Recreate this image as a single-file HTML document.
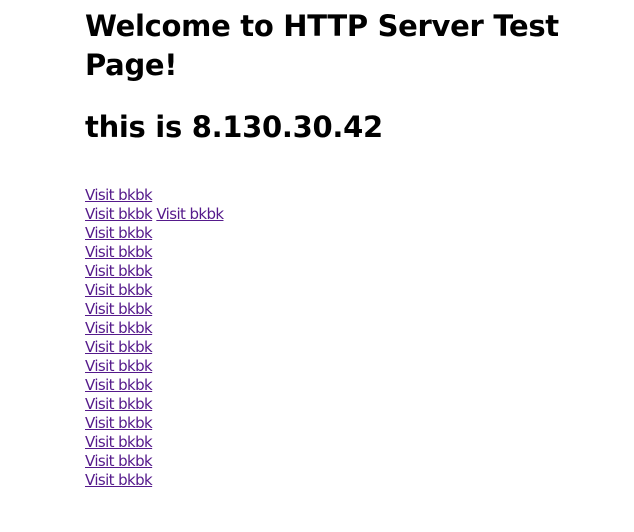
<!DOCTYPE html>
<html><head><meta charset="utf-8"><style>
html,body{margin:0;padding:0;background:#fff;width:634px;height:532px;overflow:hidden}
body{font-family:"DejaVu Sans","Liberation Sans",sans-serif;color:#000}
.h{position:absolute;left:85px;margin:0;font-weight:bold;font-size:29px;white-space:nowrap;line-height:39px;letter-spacing:-0.3px}
#links{position:absolute;left:85px;top:186px;font-size:15px;line-height:19px;font-family:"DejaVu Sans",sans-serif;letter-spacing:-0.6px}
a{color:#551a8b;text-decoration:underline}
</style></head><body>
<h1 class="h" style="top:7px">Welcome to HTTP Server Test<br>Page!</h1>
<h2 class="h" style="top:108px">this is 8.130.30.42</h2>
<div id="links">
<a>Visit bkbk</a><br>
<a>Visit bkbk</a> <a>Visit bkbk</a><br>
<a>Visit bkbk</a><br>
<a>Visit bkbk</a><br>
<a>Visit bkbk</a><br>
<a>Visit bkbk</a><br>
<a>Visit bkbk</a><br>
<a>Visit bkbk</a><br>
<a>Visit bkbk</a><br>
<a>Visit bkbk</a><br>
<a>Visit bkbk</a><br>
<a>Visit bkbk</a><br>
<a>Visit bkbk</a><br>
<a>Visit bkbk</a><br>
<a>Visit bkbk</a><br>
<a>Visit bkbk</a>
</div>
</body></html>
